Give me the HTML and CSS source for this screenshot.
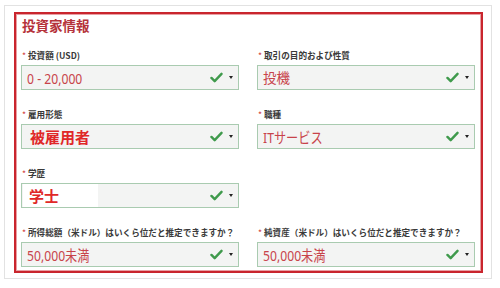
FILE: index.html
```html
<!DOCTYPE html>
<html lang="ja">
<head>
<meta charset="utf-8">
<link rel="stylesheet" href="styles.css">
</head>
<body>
<div class="frame">
  <div class="panel">
    <h1 class="title">投資家情報</h1>
    <div class="grid">
      <div class="cell">
        <div class="label"><span class="req">*</span>投資額 (USD)</div>
        <div class="field"><span class="value narrow">0 - 20,000</span><span class="icons"><svg class="check" viewBox="0 0 14 12"><path d="M1.5 6.5 L5 10 L12.5 2" /></svg><span class="arrow"></span></span></div>
      </div>
      <div class="cell">
        <div class="label"><span class="req">*</span>取引の目的および性質</div>
        <div class="field"><span class="value">投機</span><span class="icons"><svg class="check" viewBox="0 0 14 12"><path d="M1.5 6.5 L5 10 L12.5 2" /></svg><span class="arrow"></span></span></div>
      </div>
      <div class="cell">
        <div class="label"><span class="req">*</span>雇用形態</div>
        <div class="field"><span class="value strong">被雇用者</span><span class="icons"><svg class="check" viewBox="0 0 14 12"><path d="M1.5 6.5 L5 10 L12.5 2" /></svg><span class="arrow"></span></span></div>
      </div>
      <div class="cell">
        <div class="label"><span class="req">*</span>職種</div>
        <div class="field"><span class="value narrow">ITサービス</span><span class="icons"><svg class="check" viewBox="0 0 14 12"><path d="M1.5 6.5 L5 10 L12.5 2" /></svg><span class="arrow"></span></span></div>
      </div>
      <div class="cell">
        <div class="label"><span class="req">*</span>学歴</div>
        <div class="field"><span class="value strong masked">学士</span><span class="icons"><svg class="check" viewBox="0 0 14 12"><path d="M1.5 6.5 L5 10 L12.5 2" /></svg><span class="arrow"></span></span></div>
      </div>
      <div class="cell empty"></div>
      <div class="cell">
        <div class="label"><span class="req">*</span>所得総額（米ドル）はいくら位だと推定できますか？</div>
        <div class="field"><span class="value narrow">50,000未満</span><span class="icons"><svg class="check" viewBox="0 0 14 12"><path d="M1.5 6.5 L5 10 L12.5 2" /></svg><span class="arrow"></span></span></div>
      </div>
      <div class="cell">
        <div class="label"><span class="req">*</span>純資産（米ドル）はいくら位だと推定できますか？</div>
        <div class="field"><span class="value narrow">50,000未満</span><span class="icons"><svg class="check" viewBox="0 0 14 12"><path d="M1.5 6.5 L5 10 L12.5 2" /></svg><span class="arrow"></span></span></div>
      </div>
    </div>
  </div>
</div>
</body>
</html>
```
FILE: styles.css
```css
* { box-sizing: border-box; }
html, body { margin: 0; padding: 0; background: #fff; }
body {
  width: 500px;
  height: 288px;
  overflow: hidden;
  font-family: "Noto Sans", "Noto Sans CJK JP", sans-serif;
}
.frame {
  margin: 5px 0 0 4px;
  width: 488px;
  height: 274px;
  border: 1px solid #e2e2e2;
  padding: 6px 0 0 9px;
}
.panel {
  width: 469px;
  height: 261px;
  border: 2px solid #c9252d;
  box-shadow: inset 0 0 0 1px #e8a0a4;
  padding: 2px 6px 0 5px;
}
.title {
  margin: 0 0 14px 1px;
  font-family: "Noto Sans CJK JP", sans-serif;
  font-size: 13.5px;
  line-height: 19px;
  font-weight: 700;
  color: #b5323a;
  letter-spacing: 0;
}
.grid {
  display: grid;
  grid-template-columns: 218px 218px;
  column-gap: 18px;
  row-gap: 18px;
}
.cell { height: 41px; display: flex; flex-direction: column; }
.label {
  height: 16px;
  padding-left: 1px;
  font-family: "Noto Sans CJK JP", sans-serif;
  font-size: 8.6px;
  line-height: 12px;
  font-weight: 700;
  color: #3a3a3a;
  white-space: nowrap;
}
.req { color: #d03a3a; margin-right: 2px; font-weight: 400; }
.field {
  height: 25px;
  border: 1px solid #a9cbb0;
  background: #f3f4f3;
  display: flex;
  align-items: center;
  justify-content: space-between;
  padding: 0 5px 0 5px;
}
.value {
  font-family: "Noto Sans", "Noto Sans CJK JP", sans-serif;
  font-size: 13.5px;
  line-height: 20px;
  color: #c8434a;
}
.value.narrow {
  font-size: 14.5px;
  transform: scaleX(0.84);
  transform-origin: left center;
}
.value.strong {
  font-family: "Noto Sans CJK JP", sans-serif;
  font-size: 15px;
  font-weight: 700;
  color: #e02828;
  padding-left: 3px;
}
.value.masked {
  background: #fff;
  width: 75px;
  margin-left: -4px;
  padding-left: 6px;
  align-self: stretch;
  display: flex;
  align-items: center;
}
.icons { display: flex; align-items: center; gap: 6px; }
.check { width: 13px; height: 11px; }
.check path { fill: none; stroke: #3f9a4c; stroke-width: 2.6; stroke-linecap: round; stroke-linejoin: round; }
.arrow {
  width: 0; height: 0;
  border-left: 2px solid transparent;
  border-right: 2px solid transparent;
  border-top: 3px solid #222;
}
```
